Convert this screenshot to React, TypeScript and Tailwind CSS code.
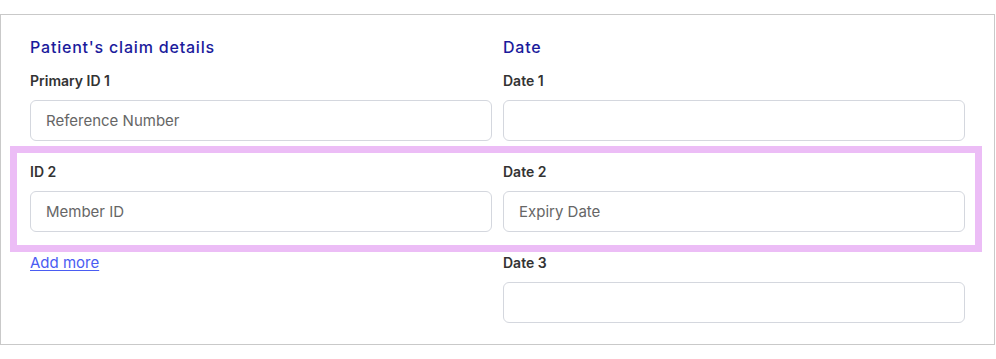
import React from "react";

const font = { fontFamily: "Inter, 'Noto Sans', sans-serif" };

function Field({ label, placeholder }: { label: string; placeholder?: string }) {
  return (
    <div className="flex flex-col">
      <div className="h-[20px] text-[14px] leading-[20px] font-semibold text-[#333333]">{label}</div>
      <input
        className="mt-[9px] h-[41px] w-full rounded-[6px] border border-[#d4d7de] bg-white px-[15px] text-[15px] text-[#333] placeholder:text-[#666666] outline-none"
        placeholder={placeholder}
      />
    </div>
  );
}

export default function App() {
  return (
    <div className="bg-white w-[996px] h-[359px] pt-[14px]" style={font}>
      <div className="w-[995px] h-[331px] border border-[#c9c9c9] pl-[29px] pt-[20px]">
        <div className="w-[935px]">
          <div className="grid grid-cols-2 gap-x-[11px]">
            <div className="h-[24px] text-[16px] leading-[24px] font-medium tracking-[0.8px] text-[#1b1b9c]">Patient's claim details</div>
            <div className="h-[24px] text-[16px] leading-[24px] font-medium tracking-[0.8px] text-[#1b1b9c]">Date</div>
          </div>
          <div className="mt-[12px] grid grid-cols-2 gap-x-[11px]">
            <Field label="Primary ID 1" placeholder="Reference Number" />
            <Field label="Date 1" />
          </div>
          <div className="mt-[5px] -ml-[20px] -mr-[17px] border-[7px] border-[#ecbdf6] pl-[13px] pr-[10px] pt-[9px] pb-[13px]">
            <div className="grid grid-cols-2 gap-x-[11px]">
              <Field label="ID 2" placeholder="Member ID" />
              <Field label="Date 2" placeholder="Expiry Date" />
            </div>
          </div>
          <div className="mt-[1px] grid grid-cols-2 gap-x-[11px]">
            <div className="leading-[18px]">
              <a href="#" className="text-[15px] leading-[18px] text-[#4a5cf2] underline underline-offset-2">Add more</a>
            </div>
            <Field label="Date 3" />
          </div>
        </div>
      </div>
    </div>
  );
}
